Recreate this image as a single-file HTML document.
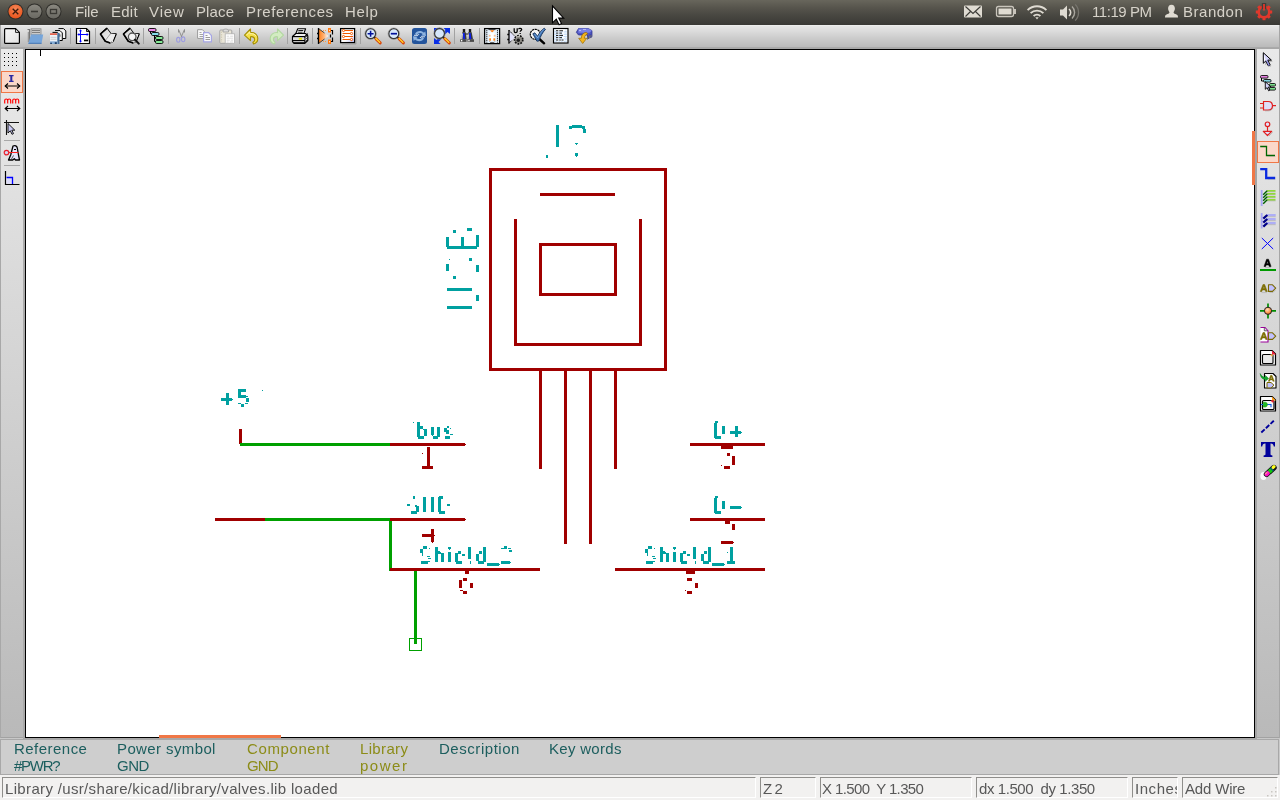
<!DOCTYPE html>
<html>
<head>
<meta charset="utf-8">
<title>EESchema</title>
<style>
html,body{margin:0;padding:0;}
body{width:1280px;height:800px;overflow:hidden;position:relative;background:#c3c3c3;font-family:"Liberation Sans",sans-serif;}
.abs{position:absolute;}
#panel{left:0;top:0;width:1280px;height:25px;background:linear-gradient(#68665c 0,#56544c 8px,#474640 16px,#3d3c38 23px,#3a3935 25px);}
#panel .m{position:absolute;top:3px;font-size:15.5px;color:#dfdbd2;white-space:nowrap;line-height:18px;}
#toolbar{left:1px;top:25px;width:1278px;height:24px;background:linear-gradient(#f0f0f0 0,#e5e5e5 1.500px,#dcdcdc 6px,#cccccc 13px,#c0c0c0 19px,#bababa 22px,#a9a9a9 22.500px,#a6a6a6 24px);}
#ltb{left:1px;top:49px;width:22px;height:689px;background:linear-gradient(#e9e9e9,#e3e3e3 15%,#b9b9b9);border-bottom:1px solid #a2a2a2;box-sizing:border-box;}
#rtb{left:1257px;top:49px;width:22px;height:689px;background:linear-gradient(#e9e9e9,#e3e3e3 15%,#b9b9b9);border-bottom:1px solid #a2a2a2;box-sizing:border-box;}
#canvas{left:25px;top:49px;width:1228px;height:687px;background:#fff;border:1px solid #000;}
#info{left:0;top:739px;width:1279px;height:36px;background:#cecece;border:1px solid #a8a8a8;box-sizing:border-box;}
#status{left:0;top:775px;width:1280px;height:25px;background:#f2f1f0;}
.sf{position:absolute;top:2px;height:21px;border-top:1px solid #8f8e8b;border-left:1px solid #8f8e8b;border-bottom:1px solid #fff;border-right:1px solid #fff;box-sizing:border-box;font-size:14.5px;color:#4c4c4c;line-height:20px;white-space:nowrap;overflow:hidden;}
.tx{will-change:transform;position:absolute;line-height:20px;white-space:pre;font-family:"Liberation Sans",sans-serif;}
</style>
</head>
<body>
<div id="panel" class="abs">
</div>
<div id="toolbar" class="abs"></div>
<div id="ltb" class="abs"></div>
<div id="rtb" class="abs"></div>
<div id="canvas" class="abs"></div>
<div class="abs" style="left:0;top:738px;width:1280px;height:1px;background:#c8c8c8"></div>
<div class="abs" style="left:23px;top:738px;width:1234px;height:1px;background:#a8a8a8"></div>
<div id="info" class="abs"></div>
<div class="abs" style="left:40px;top:50px;width:1px;height:6px;background:#000"></div>
<div class="abs" style="left:1255px;top:49px;width:2px;height:689px;background:#a4a4a4"></div>
<div class="abs" style="left:23px;top:49px;width:2px;height:689px;background:#a9a9a9"></div>
<div class="abs" style="left:0;top:25px;width:1px;height:713px;background:#a8a8a8"></div>
<div class="abs" style="left:1279px;top:25px;width:1px;height:713px;background:#a6a6a6"></div>
<div class="abs" style="left:1279px;top:739px;width:1px;height:36px;background:#cacaca"></div>
<div id="status" class="abs">
  <div class="sf" style="left:2px;width:754px;padding-left:2px"></div>
  <div class="sf" style="left:760px;width:56px;padding-left:3px"></div>
  <div class="sf" style="left:820px;width:152px;padding-left:3px"></div>
  <div class="sf" style="left:976px;width:152px;padding-left:3px"></div>
  <div class="sf" style="left:1132px;width:46px;padding-left:3px"></div>
  <div class="sf" style="left:1182px;width:96px;padding-left:3px"></div>
</div>
<svg class="abs" style="left:0;top:0" width="1280" height="800" shape-rendering="crispEdges">
<rect x="489" y="168" width="178" height="3" fill="#a00000"/>
<rect x="489" y="368" width="178" height="3" fill="#a00000"/>
<rect x="489" y="168" width="3" height="203" fill="#a00000"/>
<rect x="664" y="168" width="3" height="203" fill="#a00000"/>
<rect x="540" y="193" width="75" height="3" fill="#a00000"/>
<rect x="514" y="219" width="3" height="127" fill="#a00000"/>
<rect x="639" y="219" width="3" height="127" fill="#a00000"/>
<rect x="514" y="343" width="128" height="3" fill="#a00000"/>
<rect x="539" y="243" width="78" height="3" fill="#a00000"/>
<rect x="539" y="293" width="78" height="3" fill="#a00000"/>
<rect x="539" y="243" width="3" height="53" fill="#a00000"/>
<rect x="614" y="243" width="3" height="53" fill="#a00000"/>
<rect x="539" y="370" width="3" height="99" fill="#a00000"/>
<rect x="614" y="370" width="3" height="99" fill="#a00000"/>
<rect x="564" y="370" width="3" height="174" fill="#a00000"/>
<rect x="589" y="370" width="3" height="174" fill="#a00000"/>
<rect x="239" y="429" width="3" height="15" fill="#a00000"/>
<rect x="240" y="443" width="150" height="3" fill="#00a000"/>
<rect x="390" y="443" width="75" height="3" fill="#a00000"/>
<rect x="465" y="444" width="1" height="1" fill="#a00000"/>
<rect x="389" y="518" width="3" height="53" fill="#00a000"/>
<rect x="215" y="518" width="50" height="3" fill="#a00000"/>
<rect x="265" y="518" width="125" height="3" fill="#00a000"/>
<rect x="390" y="518" width="75" height="3" fill="#a00000"/>
<rect x="465" y="519" width="1" height="1" fill="#a00000"/>
<rect x="390" y="568" width="150" height="3" fill="#a00000"/>
<rect x="414" y="571" width="3" height="73" fill="#00a000"/>
<rect x="690" y="443" width="75" height="3" fill="#a00000"/>
<rect x="690" y="518" width="75" height="3" fill="#a00000"/>
<rect x="615" y="568" width="150" height="3" fill="#a00000"/>
<rect x="427" y="447" width="3" height="22" fill="#a00000"/>
<rect x="422" y="466" width="11" height="3" fill="#a00000"/>
<rect x="422" y="453" width="1" height="1" fill="#a00000"/>
<rect x="422" y="534" width="12" height="3" fill="#a00000"/>
<rect x="434" y="535" width="1" height="1" fill="#a00000"/>
<rect x="431" y="529" width="3" height="13" fill="#a00000"/>
<rect x="432" y="542" width="1" height="1" fill="#a00000"/>
<rect x="465" y="571" width="4" height="3" fill="#a00000"/>
<rect x="463" y="578" width="4" height="3" fill="#a00000"/>
<rect x="459" y="580" width="3" height="8" fill="#a00000"/>
<rect x="470" y="583" width="3" height="5" fill="#a00000"/>
<rect x="460" y="590" width="3" height="1" fill="#a00000"/>
<rect x="463" y="591" width="4" height="3" fill="#a00000"/>
<rect x="721" y="446" width="12" height="3" fill="#a00000"/>
<rect x="727" y="453" width="3" height="3" fill="#a00000"/>
<rect x="732" y="456" width="3" height="9" fill="#a00000"/>
<rect x="724" y="466" width="6" height="3" fill="#a00000"/>
<rect x="721" y="465" width="1" height="1" fill="#a00000"/>
<rect x="725" y="521" width="5" height="3" fill="#a00000"/>
<rect x="732" y="524" width="3" height="6" fill="#a00000"/>
<rect x="721" y="541" width="12" height="3" fill="#a00000"/>
<rect x="733" y="542" width="1" height="1" fill="#a00000"/>
<rect x="686" y="571" width="9" height="3" fill="#a00000"/>
<rect x="687" y="578" width="5" height="3" fill="#a00000"/>
<rect x="695" y="583" width="3" height="5" fill="#a00000"/>
<rect x="687" y="591" width="5" height="3" fill="#a00000"/>
<rect x="685" y="590" width="1" height="1" fill="#a00000"/>
<rect x="556" y="125" width="3" height="22" fill="#00a0a0"/>
<rect x="546" y="155" width="2" height="3" fill="#00a0a0"/>
<rect x="572" y="125" width="10" height="3" fill="#00a0a0"/>
<rect x="569" y="126" width="3" height="3" fill="#00a0a0"/>
<rect x="582" y="126" width="3" height="3" fill="#00a0a0"/>
<rect x="583" y="129" width="3" height="4" fill="#00a0a0"/>
<rect x="575" y="143" width="3" height="1" fill="#00a0a0"/>
<rect x="576" y="144" width="1" height="1" fill="#00a0a0"/>
<rect x="575" y="153" width="3" height="3" fill="#00a0a0"/>
<rect x="576" y="156" width="1" height="1" fill="#00a0a0"/>
<rect x="453" y="230" width="3" height="3" fill="#00a0a0"/>
<rect x="467" y="228" width="5" height="3" fill="#00a0a0"/>
<rect x="446" y="237" width="3" height="10" fill="#00a0a0"/>
<rect x="461" y="237" width="3" height="9" fill="#00a0a0"/>
<rect x="476" y="235" width="3" height="12" fill="#00a0a0"/>
<rect x="447" y="246" width="30" height="3" fill="#00a0a0"/>
<rect x="449" y="259" width="1" height="1" fill="#00a0a0"/>
<rect x="469" y="258" width="3" height="3" fill="#00a0a0"/>
<rect x="446" y="264" width="3" height="7" fill="#00a0a0"/>
<rect x="476" y="265" width="3" height="7" fill="#00a0a0"/>
<rect x="453" y="276" width="3" height="3" fill="#00a0a0"/>
<rect x="447" y="288" width="25" height="3" fill="#00a0a0"/>
<rect x="476" y="295" width="3" height="6" fill="#00a0a0"/>
<rect x="447" y="306" width="25" height="3" fill="#00a0a0"/>
<rect x="221" y="398" width="11" height="3" fill="#00a0a0"/>
<rect x="232" y="399" width="1" height="1" fill="#00a0a0"/>
<rect x="226" y="393" width="3" height="12" fill="#00a0a0"/>
<rect x="238" y="389" width="8" height="3" fill="#00a0a0"/>
<rect x="238" y="389" width="3" height="9" fill="#00a0a0"/>
<rect x="238" y="395" width="8" height="3" fill="#00a0a0"/>
<rect x="246" y="396" width="2" height="1" fill="#00a0a0"/>
<rect x="246" y="398" width="3" height="4" fill="#00a0a0"/>
<rect x="238" y="403" width="3" height="1" fill="#00a0a0"/>
<rect x="241" y="404" width="3" height="3" fill="#00a0a0"/>
<rect x="245" y="403" width="3" height="1" fill="#00a0a0"/>
<rect x="262" y="390" width="1" height="1" fill="#00a0a0"/>
<rect x="413" y="422" width="1" height="1" fill="#00a0a0"/>
<rect x="417" y="422" width="3" height="15" fill="#00a0a0"/>
<rect x="420" y="426" width="3" height="3" fill="#00a0a0"/>
<rect x="424" y="429" width="3" height="7" fill="#00a0a0"/>
<rect x="418" y="436" width="6" height="3" fill="#00a0a0"/>
<rect x="423" y="429" width="1" height="1" fill="#00a0a0"/>
<rect x="431" y="427" width="3" height="8" fill="#00a0a0"/>
<rect x="437" y="427" width="3" height="10" fill="#00a0a0"/>
<rect x="433" y="436" width="5" height="3" fill="#00a0a0"/>
<rect x="432" y="435" width="1" height="1" fill="#00a0a0"/>
<rect x="447" y="426" width="2" height="2" fill="#00a0a0"/>
<rect x="444" y="428" width="3" height="4" fill="#00a0a0"/>
<rect x="446" y="430" width="3" height="4" fill="#00a0a0"/>
<rect x="445" y="436" width="5" height="3" fill="#00a0a0"/>
<rect x="450" y="428" width="1" height="1" fill="#00a0a0"/>
<rect x="450" y="434" width="3" height="1" fill="#00a0a0"/>
<rect x="407" y="504" width="3" height="2" fill="#00a0a0"/>
<rect x="413" y="496" width="2" height="3" fill="#00a0a0"/>
<rect x="415" y="505" width="2" height="2" fill="#00a0a0"/>
<rect x="416" y="506" width="3" height="6" fill="#00a0a0"/>
<rect x="411" y="511" width="6" height="3" fill="#00a0a0"/>
<rect x="423" y="497" width="3" height="15" fill="#00a0a0"/>
<rect x="431" y="497" width="3" height="15" fill="#00a0a0"/>
<rect x="438" y="497" width="3" height="15" fill="#00a0a0"/>
<rect x="439" y="496" width="4" height="3" fill="#00a0a0"/>
<rect x="439" y="511" width="6" height="3" fill="#00a0a0"/>
<rect x="447" y="504" width="3" height="2" fill="#00a0a0"/>
<rect x="423" y="546" width="4" height="3" fill="#00a0a0"/>
<rect x="420" y="549" width="3" height="4" fill="#00a0a0"/>
<rect x="422" y="553" width="1" height="3" fill="#00a0a0"/>
<rect x="429" y="548" width="1" height="1" fill="#00a0a0"/>
<rect x="427" y="556" width="3" height="1" fill="#00a0a0"/>
<rect x="428" y="558" width="3" height="1" fill="#00a0a0"/>
<rect x="421" y="561" width="9" height="1" fill="#00a0a0"/>
<rect x="421" y="562" width="7" height="2" fill="#00a0a0"/>
<rect x="435" y="547" width="3" height="15" fill="#00a0a0"/>
<rect x="438" y="551" width="2" height="3" fill="#00a0a0"/>
<rect x="441" y="553" width="3" height="9" fill="#00a0a0"/>
<rect x="440" y="552" width="1" height="2" fill="#00a0a0"/>
<rect x="448" y="547" width="3" height="2" fill="#00a0a0"/>
<rect x="449" y="549" width="1" height="1" fill="#00a0a0"/>
<rect x="448" y="552" width="3" height="10" fill="#00a0a0"/>
<rect x="455" y="553" width="3" height="9" fill="#00a0a0"/>
<rect x="458" y="551" width="3" height="3" fill="#00a0a0"/>
<rect x="462" y="554" width="3" height="2" fill="#00a0a0"/>
<rect x="456" y="561" width="6" height="3" fill="#00a0a0"/>
<rect x="468" y="547" width="3" height="12" fill="#00a0a0"/>
<rect x="470" y="561" width="1" height="3" fill="#00a0a0"/>
<rect x="483" y="547" width="3" height="15" fill="#00a0a0"/>
<rect x="479" y="551" width="3" height="3" fill="#00a0a0"/>
<rect x="476" y="554" width="3" height="7" fill="#00a0a0"/>
<rect x="478" y="561" width="6" height="3" fill="#00a0a0"/>
<rect x="487" y="563" width="12" height="3" fill="#00a0a0"/>
<rect x="499" y="564" width="1" height="1" fill="#00a0a0"/>
<rect x="648" y="546" width="4" height="3" fill="#00a0a0"/>
<rect x="645" y="549" width="3" height="4" fill="#00a0a0"/>
<rect x="647" y="553" width="1" height="3" fill="#00a0a0"/>
<rect x="654" y="548" width="1" height="1" fill="#00a0a0"/>
<rect x="652" y="556" width="3" height="1" fill="#00a0a0"/>
<rect x="653" y="558" width="3" height="1" fill="#00a0a0"/>
<rect x="646" y="561" width="9" height="1" fill="#00a0a0"/>
<rect x="646" y="562" width="7" height="2" fill="#00a0a0"/>
<rect x="660" y="547" width="3" height="15" fill="#00a0a0"/>
<rect x="663" y="551" width="2" height="3" fill="#00a0a0"/>
<rect x="666" y="553" width="3" height="9" fill="#00a0a0"/>
<rect x="665" y="552" width="1" height="2" fill="#00a0a0"/>
<rect x="673" y="547" width="3" height="2" fill="#00a0a0"/>
<rect x="674" y="549" width="1" height="1" fill="#00a0a0"/>
<rect x="673" y="552" width="3" height="10" fill="#00a0a0"/>
<rect x="680" y="553" width="3" height="9" fill="#00a0a0"/>
<rect x="683" y="551" width="3" height="3" fill="#00a0a0"/>
<rect x="687" y="554" width="3" height="2" fill="#00a0a0"/>
<rect x="681" y="561" width="6" height="3" fill="#00a0a0"/>
<rect x="693" y="547" width="3" height="12" fill="#00a0a0"/>
<rect x="695" y="561" width="1" height="3" fill="#00a0a0"/>
<rect x="708" y="547" width="3" height="15" fill="#00a0a0"/>
<rect x="704" y="551" width="3" height="3" fill="#00a0a0"/>
<rect x="701" y="554" width="3" height="7" fill="#00a0a0"/>
<rect x="703" y="561" width="6" height="3" fill="#00a0a0"/>
<rect x="712" y="563" width="12" height="3" fill="#00a0a0"/>
<rect x="724" y="564" width="1" height="1" fill="#00a0a0"/>
<rect x="501" y="561" width="9" height="3" fill="#00a0a0"/>
<rect x="510" y="562" width="1" height="1" fill="#00a0a0"/>
<rect x="501" y="548" width="3" height="1" fill="#00a0a0"/>
<rect x="504" y="546" width="3" height="3" fill="#00a0a0"/>
<rect x="508" y="548" width="3" height="1" fill="#00a0a0"/>
<rect x="509" y="550" width="3" height="2" fill="#00a0a0"/>
<rect x="730" y="547" width="3" height="14" fill="#00a0a0"/>
<rect x="727" y="561" width="8" height="3" fill="#00a0a0"/>
<rect x="727" y="552" width="1" height="1" fill="#00a0a0"/>
<rect x="714" y="423" width="3" height="15" fill="#00a0a0"/>
<rect x="715" y="421" width="3" height="2" fill="#00a0a0"/>
<rect x="715" y="436" width="6" height="3" fill="#00a0a0"/>
<rect x="722" y="426" width="3" height="8" fill="#00a0a0"/>
<rect x="730" y="431" width="11" height="3" fill="#00a0a0"/>
<rect x="741" y="432" width="1" height="1" fill="#00a0a0"/>
<rect x="735" y="426" width="3" height="11" fill="#00a0a0"/>
<rect x="714" y="498" width="3" height="15" fill="#00a0a0"/>
<rect x="715" y="496" width="3" height="2" fill="#00a0a0"/>
<rect x="715" y="511" width="6" height="3" fill="#00a0a0"/>
<rect x="722" y="501" width="3" height="8" fill="#00a0a0"/>
<rect x="730" y="506" width="11" height="3" fill="#00a0a0"/>
<rect x="741" y="507" width="1" height="1" fill="#00a0a0"/>
<rect x="409.5" y="638.5" width="12" height="12" fill="none" stroke="#00a000" stroke-width="1"/>
</svg>
<svg class="abs" style="left:0;top:0" width="1280" height="800">
<!-- window buttons -->
<defs>
<radialGradient id="gcl" cx="50%" cy="30%" r="70%"><stop offset="0" stop-color="#f58555"/><stop offset="1" stop-color="#e9541c"/></radialGradient>
<linearGradient id="ggr" x1="0" y1="0" x2="0" y2="1"><stop offset="0" stop-color="#8a8880"/><stop offset="1" stop-color="#6a6962"/></linearGradient>
</defs>
<circle cx="15.5" cy="11.5" r="8" fill="#2e2d29"/><circle cx="15.5" cy="11.5" r="7" fill="url(#gcl)"/>
<path d="M12.7 8.7l5.6 5.6M18.3 8.7l-5.6 5.6" stroke="#3a1a0c" stroke-width="1.3" fill="none"/>
<circle cx="34.5" cy="11.5" r="8" fill="#2e2d29"/><circle cx="34.5" cy="11.5" r="7" fill="url(#ggr)"/>
<path d="M31 11.5h7" stroke="#3a3934" stroke-width="1.6"/>
<circle cx="53.5" cy="11.5" r="8" fill="#2e2d29"/><circle cx="53.5" cy="11.5" r="7" fill="url(#ggr)"/>
<rect x="50.5" y="9.5" width="6" height="4" fill="none" stroke="#3a3934" stroke-width="1.3"/>
<!-- mail -->
<rect x="964" y="5.5" width="18" height="12" rx="1" fill="#dfdbd2"/>
<path d="M965.5 6.5l7.5 7 7.5-7M965.5 16.5l5-5M980.5 16.5l-5-5" stroke="#3c3b37" stroke-width="1.1" fill="none"/>
<!-- battery -->
<rect x="996.5" y="6.5" width="17" height="10" rx="2" fill="none" stroke="#c9c5bc" stroke-width="1.3"/>
<rect x="998.5" y="8.5" width="13" height="6" fill="#dfdbd2"/>
<rect x="1014" y="9" width="2" height="5" fill="#c9c5bc"/>
<!-- wifi -->
<g fill="none" stroke="#dfdbd2" stroke-width="1.8" stroke-linecap="butt">
<path d="M1027.6 10.2a13.2 13.2 0 0 1 18.8 0"/>
<path d="M1030.6 13.2a9 9 0 0 1 12.8 0"/>
<path d="M1033.6 16.0a4.8 4.8 0 0 1 6.8 0"/>
</g>
<path d="M1035.3 17.2h3.4l-1.7 2.2z" fill="#dfdbd2"/>
<!-- speaker -->
<path d="M1060 9.5h3l4-4v14l-4-4h-3z" fill="#dfdbd2"/>
<path d="M1069 9a4.5 4.5 0 0 1 0 7" fill="none" stroke="#dfdbd2" stroke-width="1.6"/>
<path d="M1072 6.6a8 8 0 0 1 0 11.8" fill="none" stroke="#aaa79f" stroke-width="1.4"/>
<path d="M1075.2 4.4a11.5 11.5 0 0 1 0 16.2" fill="none" stroke="#77756e" stroke-width="1.3"/>
<!-- user -->
<path d="M1171.5 4.8c2.6 0 3.4 1.9 3.4 3.8 0 1.6-.8 2.8-1.400 3.600.2 1.300 1.500 1.700 3.000 2.300 1.200.5 1.500 1.400 1.500 3h-13c0-1.600.3-2.500 1.500-3 1.500-.6 2.800-1 3-2.300-.6-.8-1.400-2-1.400-3.600 0-1.900.8-3.800 3.400-3.800z" fill="#dfdbd2"/>
<!-- power gear -->
<g transform="translate(1264 12)" >
<circle r="5.3" fill="none" stroke="#df382c" stroke-width="2.6"/>
<g fill="#df382c">
<rect x="-1.5" y="-8.200" width="3" height="3" transform="rotate(45)"/><rect x="-1.5" y="-8.200" width="3" height="3" transform="rotate(90)"/>
<rect x="-1.5" y="-8.200" width="3" height="3" transform="rotate(135)"/><rect x="-1.5" y="-8.200" width="3" height="3" transform="rotate(180)"/>
<rect x="-1.5" y="-8.200" width="3" height="3" transform="rotate(225)"/><rect x="-1.5" y="-8.200" width="3" height="3" transform="rotate(270)"/>
<rect x="-1.5" y="-8.200" width="3" height="3" transform="rotate(315)"/>
</g>
<rect x="-2.200" y="-9" width="4.400" height="6" fill="#3f3e3a"/>
<rect x="-.9" y="-8" width="1.800" height="6.500" fill="#df382c"/>
</g>
<!-- mouse cursor -->
<path d="M552.5 6v16.800l3.800-3.600 2.800 5.500 2.400-1.200-2.800-5.400h5z" fill="#fff" stroke="#000" stroke-width="1.100" stroke-linejoin="miter"/>
<!-- orange overlay scrollbars -->
<rect x="1252" y="131" width="3" height="54" fill="#f07746"/>
<rect x="159" y="735" width="122" height="3" fill="#f07746"/>
<!-- active tool buttons -->
<rect x="1.500" y="71.500" width="21" height="21" fill="#fbd8c9" stroke="#f07746"/>
<rect x="1257.500" y="141.500" width="21" height="21" fill="#fbd8c9" stroke="#f07746"/>

<!-- ===== top toolbar icons (y 28..44) ===== -->
<g stroke="#a2a2a2" stroke-width="1">
<path d="M70.500 28v16M95.500 28v16M143.500 28v16M168.500 28v16M239.500 28v16M287.500 28v16M312.500 28v16M360.500 28v16M454.500 28v16M479.500 28v16"/>
</g>
<!-- 1 new -->
<defs><linearGradient id="gpg" x1="0" y1="0" x2="1" y2="1"><stop offset="0" stop-color="#f6f6f6"/><stop offset="1" stop-color="#e2e2e2"/></linearGradient></defs>
<path d="M4.600 29.600c0-.6.400-1 1-1h10l3.800 3.800v10c0 .6-.4 1-1 1h-12.800c-.6 0-1-.4-1-1z" fill="url(#gpg)" stroke="#000" stroke-width="1.150" stroke-linejoin="round"/>
<path d="M15.600 28.800v3.600h3.600z" fill="#fff" stroke="#000" stroke-width=".9" stroke-linejoin="round"/>
<!-- 2 open -->
<path d="M27.500 29.500h2v12" stroke="#777" stroke-width="1.200" fill="none"/>
<rect x="31" y="28.800" width="10" height="6" fill="#c9c9c9" stroke="#8a8a8a" stroke-width=".8"/>
<path d="M32 30.500h8M32 32.500h8" stroke="#777" stroke-width=".9"/>
<path d="M31 34.500h12.200l-1.600 8.800h-13.200z" fill="#76a5da"/>
<path d="M28.400 43.300h13.200" stroke="#3f73b5" stroke-width="1"/>
<path d="M28.300 32v10" stroke="#8c8c8c" stroke-width="1"/>
<!-- 3 save all -->
<path d="M58.500 28.600h5l2.300 2.300v7.600h-3" fill="#f4f4f4" stroke="#000" stroke-width="1"/>
<path d="M55 30.600h5l2.300 2.300v7.600h-3" fill="#f4f4f4" stroke="#000" stroke-width="1"/>
<path d="M52.500 32.400h5l2.300 2.300v2" fill="#f4f4f4" stroke="#000" stroke-width="1"/>
<rect x="50" y="33" width="9.300" height="11" fill="#eef2f8"/>
<rect x="50" y="33.200" width="7.300" height="1.800" fill="#e26450"/>
<path d="M50.500 37.300h6M50.500 39.300h6" stroke="#c4c4c4" stroke-width=".8"/>
<rect x="57.300" y="33" width="2.200" height="11" fill="#456f9c"/>
<rect x="50" y="41.300" width="7.300" height="2.700" fill="#86aed8"/>
<rect x="50.300" y="42.700" width="1.600" height="1.300" fill="#1d3d66"/><rect x="54.800" y="42.200" width="2" height="1.800" fill="#1d3d66"/>
<!-- 4 page settings -->
<path d="M76.500 28.500h10l3 3v12h-13z" fill="#fff" stroke="#000" stroke-width="1.200" stroke-linejoin="miter"/>
<path d="M86.500 28.500v3h3" fill="none" stroke="#000" stroke-width=".9"/>
<path d="M80.500 30v12M78 34.500h10" stroke="#0000ff" stroke-width="1"/>
<path d="M80.500 29.300l-1.500 2h3zM80.500 42.700l-1.500-2h3zM77.300 34.500l2-1.500v3zM88.700 34.500l-2-1.500v3z" fill="#0000ff"/>
<rect x="84" y="39.600" width="4.200" height="1.700" fill="#000"/>
<!-- 5 library book -->
<defs><linearGradient id="gbk" x1="0" y1="0" x2="1" y2="1"><stop offset="0" stop-color="#cfcfcf"/><stop offset="1" stop-color="#f2f2f2"/></linearGradient></defs>
<g id="book">
<path d="M106.900 28.300l-6.400 5.700 4.800 7.200 4.900 1.700 3-1.700 3-7.200-5.600-.6z" fill="#fafafa" stroke="#000" stroke-width="1.300" stroke-linejoin="round"/>
<path d="M106.900 28.600l-6 5.400 4.300 6.300 5.200-6.800z" fill="url(#gbk)"/>
<path d="M110.600 33.600l-5.200 6.900 4.700 1.600 2.700-1.500 2.700-6.500z" fill="#ececec"/>
<path d="M110.600 33.500l-5.300 7" stroke="#8a8a8a" stroke-width=".8"/>
<path d="M105.300 41.200l4.900 1.600 3-1.700" fill="none" stroke="#fff" stroke-width=".9"/>
<path d="M106.900 28.300l-6.400 5.700 4.800 7.200 4.900 1.700" fill="none" stroke="#000" stroke-width="1.600" stroke-linejoin="round"/>
</g>
<!-- 6 library browse -->
<g transform="translate(23 0)">
<path d="M106.900 28.300l-6.400 5.700 4.800 7.200 4.900 1.700 3-1.700 3-7.200-5.600-.6z" fill="#fafafa" stroke="#000" stroke-width="1.300" stroke-linejoin="round"/>
<path d="M106.900 28.600l-6 5.400 4.300 6.300 5.200-6.800z" fill="url(#gbk)"/>
<path d="M110.600 33.600l-5.200 6.900 4.700 1.600 2.700-1.500 2.700-6.500z" fill="#ececec"/>
<path d="M110.600 33.500l-5.300 7" stroke="#8a8a8a" stroke-width=".8"/>
<path d="M105.300 41.200l4.900 1.600 3-1.700" fill="none" stroke="#fff" stroke-width=".9"/>
<path d="M106.900 28.300l-6.400 5.700 4.800 7.200 4.900 1.700" fill="none" stroke="#000" stroke-width="1.600" stroke-linejoin="round"/>
</g>
<circle cx="132.200" cy="36.800" r="3.800" fill="#f6f6f6" stroke="#555" stroke-width="1.300"/>
<path d="M135 39.800l3.800 3.800" stroke="#111" stroke-width="2" stroke-linecap="round"/>
<!-- 7 hierarchy -->
<path d="M150.500 31v2.500h2M154.500 35v6.500h2M154.500 37.500h2" fill="none" stroke="#000" stroke-width="1"/>
<g stroke="#000" stroke-width=".9">
<rect x="148.500" y="28.500" width="7.500" height="3" rx="1.200" fill="#f08cec"/>
<rect x="151.500" y="32.500" width="7.500" height="3" rx="1.200" fill="#86dcea"/>
<rect x="155.500" y="36.500" width="7.500" height="3" rx="1.200" fill="#84ea96"/>
<rect x="155.500" y="40.500" width="7.500" height="3" rx="1.200" fill="#84ea96"/>
</g>
<!-- 8 cut (disabled) -->
<path d="M178.500 29.500l3.500 8M184.500 29.500l-3.500 8M178.500 29.500v3M184.500 29.500v3" fill="none" stroke="#8e8e8e" stroke-width="1"/>
<ellipse cx="178.300" cy="39.800" rx="1.700" ry="2.400" fill="none" stroke="#9c9ce0" stroke-width="1.100"/>
<ellipse cx="183.200" cy="39.300" rx="1.700" ry="2.400" fill="none" stroke="#9c9ce0" stroke-width="1.100"/>
<!-- 9 copy (disabled) -->
<path d="M197.600 29.700h4.800l2 2v6.700h-6.800z" fill="#fafafa" stroke="#9a9a9a" stroke-width="1"/>
<path d="M199.500 32.500h2M199.500 34.500h4M199.500 36.500h4" stroke="#9a9a9a" stroke-width=".9"/>
<path d="M203.600 32.700h5l2.800 2.800v6.300h-7.800z" fill="#fafafa" stroke="#a6a6e4" stroke-width="1.200"/>
<path d="M205.500 35.500h2M205.500 37.500h4.500M205.500 39.500h4.500" stroke="#8e8e8e" stroke-width=".9"/>
<!-- 10 paste (disabled) -->
<rect x="219.800" y="30" width="12" height="13.300" rx="1" fill="#e9e5d8" stroke="#a6a6a6" stroke-width="1"/>
<path d="M221.500 31.500v10.500" stroke="#d2ceb8" stroke-width="1.200" stroke-dasharray="1.500 1"/>
<path d="M223 30.800c0-2.300 5.500-2.300 5.500 0v1.200h-5.500z" fill="#dcdcdc" stroke="#9c9c9c" stroke-width=".8"/>
<rect x="225.200" y="33.800" width="9.300" height="9.500" fill="#fff" stroke="#b0b0b0" stroke-width=".8"/>
<path d="M226.700 36.200h2.500M230.200 36.200h3M226.700 38.200h6.500M226.700 40.200h3M230.700 40.200h2.500M226.700 42h2M229.700 42h3.500" stroke="#bdbdbd" stroke-width=".55"/>
<!-- 11 undo -->
<path d="M244.500 35.200l6-6.200v3.600c4.500-.3 7.300 2.200 7.300 6 0 3-1.500 4.800-4.300 5.400l-.6-1.700c1.600-.8 1.900-2.100 1.700-3.300-.3-1.700-1.900-2.500-4.100-2.300v3.900z" fill="#f5e04a" stroke="#a48f00" stroke-width="1.100" stroke-linejoin="round"/>
<path d="M246.500 35.200l3.300-3.400v1.800c3.500-.2 5.600.8 6.400 2.800" fill="none" stroke="#fdf5b4" stroke-width=".9"/>
<!-- 12 redo (disabled) -->
<path d="M283.500 35.200l-6-6.200v3.600c-4.500-.3-7.300 2.200-7.300 6 0 3 1.500 4.800 4.300 5.400l.6-1.700c-1.600-.8-1.900-2.100-1.700-3.300.3-1.700 1.900-2.500 4.100-2.300v3.900z" fill="#d3ecc2" stroke="#b2d8a0" stroke-width="1.100" stroke-linejoin="round"/>

<!-- 13 printer -->
<path d="M295.800 33.500l2-4.800h7.800l-1.800 4.800z" fill="#fff" stroke="#000" stroke-width="1.100" stroke-linejoin="round"/>
<path d="M298.300 30.500h5M297.700 32.200h5" stroke="#000" stroke-width=".9"/>
<path d="M292.500 36.500l3.300-3h9.700l2.300 2.300v4.700l-3 2.800h-10.800l-1.500-1.800z" fill="#f0f0f0" stroke="#000" stroke-width="1.200" stroke-linejoin="round"/>
<path d="M292.500 36.600h12.300l3-3M304.800 36.600v6.600" stroke="#000" stroke-width="1.100" fill="none"/>
<rect x="293.300" y="37.800" width="11" height="2" fill="#d9d9d9"/>
<rect x="298.800" y="37.900" width="3.200" height="1.800" fill="#e8e800"/>
<path d="M293 40.500h11.800M293.500 42.300h11" stroke="#000" stroke-width="1"/>
<path d="M305.300 37.500l2-2M305.300 39.500l2-2M305.300 41.500l2-2" stroke="#000" stroke-width=".8"/>
<!-- 14 library editor (orange triangle) -->
<defs><linearGradient id="gor" x1="0" y1="0" x2="1" y2="0"><stop offset="0" stop-color="#ff7a10"/><stop offset=".55" stop-color="#ffb478"/><stop offset="1" stop-color="#fff"/></linearGradient></defs>
<path d="M318.500 28.500v15l10-7.500z" fill="url(#gor)"/>
<path d="M318.500 28v16M317 33.500h1.500M317 38.500h1.500" stroke="#000" stroke-width="1.300" fill="none"/>
<path d="M318.500 28.500l6 4.500M318.500 43.500l6-4.500" stroke="#222" stroke-width=".8" fill="none"/>
<path d="M330 30.500h2.500v4M330 41.500h2.500v-4M330.500 34.500v3" stroke="#000" stroke-width="1.200" fill="none"/>
<rect x="328" y="28" width="3" height="4.500" fill="#ff7a10"/><rect x="328" y="39.500" width="3" height="4.500" fill="#ff7a10"/>
<rect x="329" y="29.800" width="1" height="1" fill="#fff"/><rect x="329" y="41.300" width="1" height="1" fill="#fff"/>
<path d="M323 30.500h3M323 41.500h3" stroke="#ff9a40" stroke-width="1" stroke-dasharray="1 1"/>
<!-- 15 pcb -->
<defs><linearGradient id="gpcb" x1="0" y1="0" x2="1" y2="1"><stop offset="0" stop-color="#fff"/><stop offset=".6" stop-color="#fff"/><stop offset="1" stop-color="#b9b9f5"/></linearGradient></defs>
<rect x="340.600" y="28.600" width="14" height="14" fill="url(#gpcb)" stroke="#000" stroke-width="1.250"/>
<path d="M356 30v14h-14" stroke="#8a8a8a" stroke-width="1" fill="none" opacity=".6"/>
<g stroke="#f25a00" stroke-width="1" fill="#fff">
<path d="M344.500 30.500h8.500M342.500 33.500h8M344.500 36.500h8.500M342.500 39.500h8"/>
<circle cx="343.500" cy="30.500" r="1.100"/><circle cx="351.500" cy="33.500" r="1.100"/><circle cx="343.500" cy="36.500" r="1.100"/><circle cx="351.500" cy="39.500" r="1.100"/>
</g>
<!-- 16 zoom in -->
<g id="lens">
<circle cx="370.600" cy="33.700" r="5" fill="#d8e8fb" stroke="#333" stroke-width="1.300"/>
<circle cx="370.600" cy="33.700" r="5.800" fill="none" stroke="#8f8f8f" stroke-width=".5"/>
<path d="M374.200 37.200l1.600 1.500" stroke="#222" stroke-width="1.800"/>
<path d="M376 38.900l4.200 4" stroke="#d8420a" stroke-width="3" stroke-linecap="round"/>
<path d="M375.900 38.600l3.800 3.600" stroke="#ffd428" stroke-width="1.400" stroke-linecap="round"/>
</g>
<path d="M367.600 33.700h6M370.600 30.700v6" stroke="#00109a" stroke-width="1.500"/>
<!-- 17 zoom out -->
<g transform="translate(23.200 0)">
<circle cx="370.600" cy="33.700" r="5" fill="#d8e8fb" stroke="#333" stroke-width="1.300"/>
<circle cx="370.600" cy="33.700" r="5.800" fill="none" stroke="#8f8f8f" stroke-width=".5"/>
<path d="M374.200 37.200l1.600 1.500" stroke="#222" stroke-width="1.800"/>
<path d="M376 38.900l4.200 4" stroke="#d8420a" stroke-width="3" stroke-linecap="round"/>
<path d="M375.900 38.600l3.800 3.600" stroke="#ffd428" stroke-width="1.400" stroke-linecap="round"/>
</g>
<path d="M790.600 33.700" />
<path d="M390.800 33.700h6.200" stroke="#00109a" stroke-width="1.700"/>
<!-- 18 redraw -->
<rect x="412" y="28" width="15" height="16" rx="2.500" fill="#23549c"/>
<path d="M415 34c1-3 6-4.200 9-1.300l1.300-1.400.7 4.700-4.700-.5 1.400-1.400c-2-1.700-5-1.200-5.700 1.200z" fill="#8fb4e0"/>
<path d="M424 38.200c-1 3-6 4.200-9 1.300l-1.300 1.400-.7-4.700 4.700.5-1.400 1.400c2 1.700 5 1.200 5.700-1.200z" fill="#8fb4e0"/>
<path d="M414 35.300h4l1-1.200M425 36.800h-4l-1 1.200" stroke="#eaf2fb" stroke-width=".9" fill="none"/>
<!-- 19 zoom fit -->
<path d="M434 28h6.500l-2 2 2.500 2.500-2 2-2.500-2.500-2.500 2zM450 28h-6.500l2 2-2.500 2.500 2 2 2.500-2.500 2.500 2zM434 44h6.500l-2-2 2.500-2.500-2-2-2.500 2.500-2.500-2z" fill="#0a2fe6"/>
<circle cx="439.500" cy="33.500" r="5" fill="#d6e7fa" stroke="#333" stroke-width="1.300"/>
<circle cx="439.500" cy="33.500" r="5.800" fill="none" stroke="#8f8f8f" stroke-width=".5"/>
<path d="M443.100 37.100l1.600 1.500" stroke="#222" stroke-width="1.800"/>
<path d="M445 38.800l4.300 4.100" stroke="#d8420a" stroke-width="3" stroke-linecap="round"/>
<path d="M444.900 38.500l3.900 3.700" stroke="#ffd428" stroke-width="1.400" stroke-linecap="round"/>
<!-- 20 find (binoculars) -->
<g>
<rect x="462.800" y="29" width="2.400" height="3.500" fill="#1a1a1a"/><rect x="468.800" y="29" width="2.400" height="3.500" fill="#1a1a1a"/>
<path d="M462.300 32.300h3.500l.9 7.300h-5.700z" fill="#3a3a3a"/>
<path d="M468.200 32.300h3.500l1.300 7.300h-5.700z" fill="#3a3a3a"/>
<path d="M463.700 33l.5 6.500M469.800 33l.7 6.500" stroke="#0a1ef0" stroke-width="1.700"/>
<path d="M462.300 33.500l-.5 5.500M468.300 33.500l-.3 5.500" stroke="#fff" stroke-width="1"/>
<rect x="460.200" y="39.300" width="6.300" height="2.600" fill="#4a4a4a"/><rect x="467.500" y="39.300" width="6.500" height="2.600" fill="#4a4a4a"/>
<rect x="461" y="39.800" width="1.300" height="1.600" fill="#fff"/><rect x="468.300" y="39.800" width="1.300" height="1.600" fill="#fff"/>
<path d="M465.500 34h3" stroke="#333" stroke-width="1.200"/>
</g>
<!-- 21 netlist -->
<rect x="484.600" y="28.600" width="15" height="15" fill="#e8f3fd" stroke="#000" stroke-width="1.250"/>
<path d="M486.800 30.200v12.500M497.500 30.200v12.500" stroke="#000" stroke-width="1.100" stroke-dasharray="1 1"/>
<path d="M488.500 29.600h7" stroke="#222" stroke-width=".9"/>
<path d="M490 30.200h4.400l-2.200 2.300z" fill="#ff7a10"/>
<rect x="489.800" y="32.500" width="4.800" height="8" fill="#fff"/>
<rect x="488.800" y="34.800" width="1.800" height="1.800" fill="#ffc090"/><rect x="493.800" y="34.800" width="1.800" height="1.800" fill="#ffc090"/>
<rect x="489.200" y="38.300" width="1.800" height="2.400" fill="#ff8a20"/><rect x="493.400" y="38.300" width="1.800" height="2.400" fill="#ff8a20"/>
<path d="M489.800 41.700l1 1h2.800l1-1" stroke="#333" stroke-width=".9" fill="none"/>
<!-- 22 annotate -->
<path d="M509 30.300v13l6-6.300z" fill="#e2e2fb"/>
<path d="M509 30v13.500M507.300 34.500h1.700M507.300 39.500h1.700" stroke="#000" stroke-width="1.300"/>
<path d="M509 30.300l5 5.200M509 43.300l2.500-2.600" stroke="#000" stroke-width="1" stroke-dasharray="1.400 .8"/>
<path d="M514.200 28.300v3c0 1.700 3 1.700 3 0v-3M518.700 29.300c0-1.300 3-1.300 3 .2 0 1.100-1.500 1-1.500 2.300M520.200 33v1" fill="none" stroke="#000" stroke-width="1.250"/>
<circle cx="518.700" cy="39.800" r="4" fill="#8c8a84" stroke="#111" stroke-width="1.900" stroke-dasharray="1.700 1.100"/>
<circle cx="518.700" cy="39.800" r="3.100" fill="#8c8a84"/>
<circle cx="518.300" cy="40.200" r="1.700" fill="#1a1a1a"/>
<path d="M516 37.500a3.500 3.500 0 0 1 4-.8" stroke="#c8c6c0" stroke-width=".9" fill="none"/>
<!-- 23 erc -->
<circle cx="535.300" cy="34.300" r="5" fill="#f6f6f6" stroke="#000" stroke-width="1.200" stroke-dasharray="2.200 .6"/>
<path d="M539.300 39l4.800 4.300" stroke="#000" stroke-width="2.400" stroke-linecap="round"/>
<path d="M532.800 33.800l2-1 2.800 3.400c1.600-3.200 3.600-5.800 6.600-8l1.300 1.200c-3 3-5 6.800-6.600 11.600l-2 .2z" fill="#3f74b6" stroke="#0e2a52" stroke-width=".8" stroke-linejoin="round"/>
<path d="M534.500 34l3.200 4c1.500-3.300 3.500-6.300 6.300-8.800" fill="none" stroke="#8ab4e6" stroke-width=".7"/>
<!-- 24 bom -->
<rect x="553.500" y="28.500" width="14.500" height="14.500" fill="#fff" stroke="#000" stroke-width="1.150"/>
<g stroke="#000" stroke-width=".95"><path d="M556 30.800h2.300M559.300 30.800h3.700M556 33.100h2.300M559.300 33.100h2.700M556 35.400h2.300M559.300 35.400h3.700M556 37.700h2.300M559.300 37.700h2.700M556 40h2.300M559.300 40h1.500M561.500 40h2"/></g>
<g stroke="#86b8f0" stroke-width=".7" stroke-dasharray=".8 .8"><path d="M554.500 31.950h12.500M554.500 34.250h12.500M554.500 36.550h12.500M554.500 38.850h12.500M554.500 41.300h12.500M555.200 29.500v13M565.800 29.500v13"/></g>
<!-- 25 back annotate -->
<path d="M576.300 32.300l2.200-3.800h9.800l3.700 2.200v6l-1.600 1v-3l-1.400 1v2.600l-1.500.5v-3.800h-9z" fill="#4f56c0" stroke="#262c88" stroke-width=".7"/>
<path d="M578.500 28.500h9.800l3.700 2.200-2.700 2h-11z" fill="#7a82e6"/>
<path d="M579 30.500h2M583 29.500h3" stroke="#c8ccff" stroke-width=".8"/>
<path d="M586.300 32.300c-3.200.4-5 2.800-5 6h-2.600l4 5.200 4-5.200h-2.400c.1-2.200 1.400-3.700 3.400-4.300z" fill="#f2b41e" stroke="#9a6c00" stroke-width=".7"/>
<path d="M587.500 37v2.500M589.300 36v2.500M591 35v2.500" stroke="#6a6a6a" stroke-width="1"/>

<!-- ===== left toolbar ===== -->
<g fill="#000" shape-rendering="crispEdges">
<rect x="4" y="53" width="1" height="1"/><rect x="8" y="53" width="1" height="1"/><rect x="12" y="53" width="1" height="1"/><rect x="16" y="53" width="1" height="1"/>
<rect x="4" y="57" width="1" height="1"/><rect x="8" y="57" width="1" height="1"/><rect x="12" y="57" width="1" height="1"/><rect x="16" y="57" width="1" height="1"/>
<rect x="4" y="61" width="1" height="1"/><rect x="8" y="61" width="1" height="1"/><rect x="12" y="61" width="1" height="1"/><rect x="16" y="61" width="1" height="1"/>
<rect x="4" y="65" width="1" height="1"/><rect x="8" y="65" width="1" height="1"/><rect x="12" y="65" width="1" height="1"/><rect x="16" y="65" width="1" height="1"/>
</g>
<!-- inches -->
<path d="M9 75h4.600v1.200h-1.300v4.600h1.300v1.200h-4.600v-1.200h1.300v-4.600h-1.300z" fill="#2a2aa2"/>
<path d="M5.500 86h14" stroke="#000" stroke-width="1"/>
<path d="M8 83.500l-2.800 2.500 2.800 2.500M17 83.500l2.800 2.500-2.800 2.500" fill="none" stroke="#000" stroke-width="1.100"/>
<!-- mm -->
<path d="M4.700 103.500v-3c0-2 3-2 3 0v3M7.700 100.500c0-2 3-2 3 0v3M12.700 103.500v-3c0-2 3-2 3 0v3M15.700 100.500c0-2 3-2 3 0v3" fill="none" stroke="#ff0000" stroke-width="1.150"/>
<path d="M5.500 108.500h14" stroke="#000" stroke-width="1"/>
<path d="M8 106l-2.800 2.500 2.800 2.500M17 106l2.800 2.500-2.800 2.500" fill="none" stroke="#000" stroke-width="1.100"/>
<!-- cursor shape -->
<path d="M4 122.500h15M6.500 120v15" stroke="#111" stroke-width="1.100"/>
<path d="M8 123.500v9.500l2.300-2.200 1.700 3.500 1.500-.7-1.700-3.400h3z" fill="#c9c9f5" stroke="#000" stroke-width=".9" stroke-linejoin="round"/>
<path d="M4 140.500h16M4 165.500h16" stroke="#a8a8a8" stroke-width="1"/>
<!-- hidden pins ghost -->
<path d="M13 146c2-1 4 0 4.300 2l1.200 7 1 5h-4l-1.200-1.200-1.500 1.200h-4.300l2.200-5z" fill="#e4e4fa" stroke="#000" stroke-width="1.300" stroke-linejoin="round"/>
<path d="M14 149.500h2" stroke="#000" stroke-width="1"/>
<path d="M13.500 155.500l-2 3.500" stroke="#333" stroke-width=".8"/>
<path d="M9 152.500h9.500" stroke="#ff2020" stroke-width="1"/>
<circle cx="6.500" cy="152.600" r="2.300" fill="#d6d6f2" stroke="#e8202a" stroke-width="1.200"/>
<!-- orthogonal -->
<path d="M5.500 171v13.500h14" fill="none" stroke="#000" stroke-width="1.200"/>
<rect x="6.500" y="177.500" width="5.500" height="6" fill="#dcdcfa"/>
<path d="M6.500 177.500h6v6.500" fill="none" stroke="#0000ff" stroke-width="1.300"/>

<!-- ===== right toolbar ===== -->
<!-- arrow -->
<path d="M1264.300 54.200l1 11 2.500-2.300 2 4 1.600-.8-2-4 3.400-.3z" fill="#555" opacity=".35"/>
<path d="M1263.300 52.700v10.600l2.600-2.400 2.400 5 1.800-.9-2.400-4.900h3.700z" fill="#d4d4fb" stroke="#000" stroke-width="1" stroke-linejoin="round"/>
<path d="M1264 54.500v7l1.500-1.500z" fill="#fff"/>
<path d="M1266.700 60.500l2.500 5" stroke="#8e8ee6" stroke-width="1.300"/>
<!-- hierarchy nav -->
<path d="M1261.500 78v3h2" fill="none" stroke="#000" stroke-width="1"/>
<g stroke="#000" stroke-width=".85">
<rect x="1260.500" y="75.500" width="7.500" height="2.600" rx="1" fill="#e684e0"/>
<rect x="1263.500" y="79.500" width="7.500" height="2.600" rx="1" fill="#7fd3e0"/>
<rect x="1269.500" y="83.500" width="6" height="2.600" rx="1" fill="#7be08c"/>
<rect x="1269.500" y="87.500" width="6" height="2.600" rx="1" fill="#7be08c"/>
</g>
<path d="M1265.300 81.700v7.600l1.800-1.700 1.500 3.200 1.300-.6-1.500-3.200h2.600z" fill="#d4d4fb" stroke="#000" stroke-width=".9" stroke-linejoin="round"/>
<!-- place component (AND gate) -->
<path d="M1263.500 101.500h4.500c6 0 6 8.500 0 8.500h-4.500z" fill="#dedefa" stroke="#e02020" stroke-width="1.200"/>
<path d="M1260 103.500h3.500M1260 108h3.500M1272.800 105.700h3.200" stroke="#e02020" stroke-width="1.200"/>
<path d="M1265 110.800h4c2-.3 3.500-1.500 4-3" fill="none" stroke="#888" stroke-width=".8" opacity=".6"/>
<!-- power -->
<circle cx="1267.500" cy="124.300" r="2.300" fill="#e0e0fb" stroke="#e02020" stroke-width="1.200"/>
<path d="M1267.500 126.800v4.500" stroke="#e02020" stroke-width="1.200"/>
<path d="M1263.300 131.300h8.400l-4.200 4.200z" fill="#e0e0fb" stroke="#e02020" stroke-width="1.200" stroke-linejoin="round"/>
<path d="M1269 136l3.500-3.800" stroke="#888" stroke-width=".8" opacity=".6"/>
<!-- wire -->
<path d="M1260.200 146.500h6.300v9h8.500" fill="none" stroke="#006600" stroke-width="1.300"/>
<path d="M1267.500 156.500h8" stroke="#999" stroke-width=".7" opacity=".5"/>
<!-- bus -->
<path d="M1260.200 169.200h6v8.800h9" fill="none" stroke="#0a2ae0" stroke-width="2.300"/>
<path d="M1267.800 179.600h7.500" stroke="#888" stroke-width=".7" opacity=".5"/>
<!-- wire to bus entry -->
<rect x="1260.800" y="190" width="1.800" height="16" fill="#a6a6f4"/>
<path d="M1267 190.800h8.500M1267 193.800h8.500M1267 196.800h8.500M1267 199.800h8.500" stroke="#77d800" stroke-width="1.300"/>
<path d="M1267.200 190.800l-4 4M1267.200 193.800l-4 4M1267.200 196.800l-4 4M1267.200 199.800l-4 4" stroke="#006000" stroke-width="1.400"/>
<path d="M1267 191.900h8.500M1267 194.900h8.500M1267 197.900h8.500M1267 200.900h8.500" stroke="#888" stroke-width=".6" opacity=".6"/>
<!-- bus to bus entry -->
<rect x="1260.800" y="213" width="1.800" height="15.500" fill="#a6a6f4"/>
<path d="M1267 215.200h8.700M1267 219.200h8.700M1267 223.200h8.700" stroke="#aeaef6" stroke-width="2.200"/>
<path d="M1267.300 215l-4 3.600M1267.300 219l-4 3.600M1267.300 223l-4 3.600" stroke="#000088" stroke-width="2.300"/>
<path d="M1267 216.700h8.700M1267 220.700h8.700M1267 224.700h8.700" stroke="#888" stroke-width=".6" opacity=".6"/>
<!-- no connect -->
<path d="M1261.800 238l11.400 11M1273.200 238l-11.400 11" stroke="#0000ff" stroke-width="1"/>
<!-- label A -->
<path d="M1264 266.500l2.600-7.300h1.900l2.600 7.300h-1.900l-.5-1.500h-2.500l-.5 1.500zM1266.700 263.600h1.600l-.8-2.500z" fill="#000" stroke="#000" stroke-width=".5"/>
<rect x="1260" y="269" width="16" height="2" fill="#009a00"/>
<path d="M1265 267.500h6" stroke="#888" stroke-width=".7" opacity=".5"/>
<!-- global label AD -->
<g id="adlab">
<path d="M1260.300 291.500l2.700-7h1.600l2.700 7h-1.600l-.6-1.600h-2.700l-.6 1.600zM1263 288.600h1.700l-.85-2.400z" fill="#857400" stroke="#6b5e00" stroke-width=".5"/>
<path d="M1268.500 284.800h4l3.200 3.300-3.200 3.300h-4z" fill="#c0c0ff" stroke="#7a6a00" stroke-width="1.100" stroke-linejoin="round"/>
</g>
<path d="M1261.500 292.600h5.500M1269.500 292.500h3.500l2.500-2.500" stroke="#888" stroke-width=".7" opacity=".5" fill="none"/>
<!-- junction -->
<path d="M1260 310.800h16M1268 303.500v15" stroke="#008c00" stroke-width="1.700"/>
<defs><radialGradient id="gj" cx="40%" cy="35%" r="70%"><stop offset="0" stop-color="#ffe0c0"/><stop offset=".6" stop-color="#ff9a50"/><stop offset="1" stop-color="#d06010"/></radialGradient></defs>
<circle cx="1268" cy="310.800" r="3.600" fill="url(#gj)" stroke="#222" stroke-width="1"/>
<!-- hierarchical label -->
<path d="M1260.500 327.500h4.500l3 3.500v11h-7.500" fill="#fff" stroke="#990099" stroke-width="1.100"/>
<path d="M1264.300 327.800v3h3" fill="#ddd" stroke="#444" stroke-width=".8"/>
<g transform="translate(0 48)">
<path d="M1260.300 291.500l2.700-7h1.600l2.700 7h-1.600l-.6-1.600h-2.700l-.6 1.600zM1263 288.600h1.700l-.85-2.400z" fill="#857400" stroke="#6b5e00" stroke-width=".5"/>
<path d="M1268.500 284.800h4l3.200 3.300-3.200 3.300h-4z" fill="#c0c0ff" stroke="#7a6a00" stroke-width="1.100" stroke-linejoin="round"/>
</g>
<!-- hierarchical sheet -->
<path d="M1260.500 350.500h11.500l3.500 3.500v11h-15z" fill="#fdfdfd" stroke="#000" stroke-width="1.200" stroke-linejoin="round"/>
<rect x="1262.500" y="354.500" width="10.500" height="9" rx="1" fill="#e9e9e9" stroke="#000" stroke-width="1.100"/>
<path d="M1272 350.400l4 4h-4z" fill="#f0203a"/>
<path d="M1270.500 354.300h2.200v2.200c-1.300 0-2.200-.8-2.200-2.200z" fill="#ffb84a"/>
<!-- import hier label -->
<path d="M1264.500 373.500h8.500l3 3v11.500h-11.500z" fill="#fdfdfd" stroke="#000" stroke-width="1.100" stroke-linejoin="round"/>
<path d="M1260.200 373.600c1.200 2.600 3 3.700 5.200 3.700v-1.800l3.200 2.900-3.200 2.900v-1.800c-3 0-5-2.300-5.200-5.900z" fill="#10a82a" stroke="#0a7a1c" stroke-width=".5"/>
<path d="M1268.300 381.300l2.300-6h1.400l2.300 6h-1.400l-.5-1.400h-2.200l-.5 1.400zM1270.600 378.800h1.400l-.7-2z" fill="#857400" stroke="#6b5e00" stroke-width=".4"/>
<path d="M1267 382.500h4l3 2.700-3 2.700h-4z" fill="#c0c0ff" stroke="#7a6a00" stroke-width="1"/>
<!-- sheet pin -->
<path d="M1260.500 396.500h11.500l3.500 3.500v11h-15z" fill="#fdfdfd" stroke="#000" stroke-width="1.200" stroke-linejoin="round"/>
<rect x="1262.500" y="400.500" width="11.500" height="9" rx="1" fill="#f4f4f4" stroke="#000" stroke-width="1.200"/>
<path d="M1272 396.400l4 4h-4z" fill="#ffa020"/>
<path d="M1271 400.200h2.600v2.400c-1.500 0-2.600-.9-2.600-2.400z" fill="#f0203a"/>
<path d="M1261 404.500h2.500M1267 404.500h4v2.800" fill="none" stroke="#0a5cf0" stroke-width="1.100"/>
<path d="M1263.300 402.200h1.800c3 0 3 4.800 0 4.800h-1.800z" fill="#22bb22" stroke="#10a010" stroke-width=".6"/>
<!-- dashed line -->
<path d="M1261.300 432.500l13.200-12.400" stroke="#00009b" stroke-width="1.900" stroke-dasharray="4.600 1.700"/>
<!-- text T -->
<path d="M1261 442h14v4.500h-1.200c-.3-1.800-1.200-2.700-3-2.900h-.3v10.400c0 1 .6 1.400 1.900 1.500v1.500h-8.800v-1.500c1.300-.1 1.900-.5 1.900-1.500v-10.400h-.3c-1.800.2-2.700 1.100-3 2.900h-1.200z" fill="#00009b"/>
<!-- delete (eraser) -->
<ellipse cx="1263.500" cy="476" rx="3.200" ry="4" fill="#fff" opacity=".9"/>
<g transform="rotate(-42 1270 471)">
<rect x="1262.500" y="468.300" width="15.500" height="5.600" rx="2.800" fill="#111"/>
<rect x="1263.200" y="469" width="6" height="4.200" rx="2.100" fill="#ff10c8"/>
<rect x="1264" y="469.400" width="3.500" height="1.300" rx=".6" fill="#ff9090"/>
<rect x="1268.700" y="469" width="3.300" height="4.200" fill="#10c810"/>
<rect x="1272" y="469" width="1.200" height="4.200" fill="#0a6a9a"/>
<rect x="1273.200" y="469" width="4.200" height="3" rx="1.200" fill="#ffff20"/>
</g>

<!-- resize grip -->
<g fill="#c9c7c2">
<rect x="1275" y="787" width="1.500" height="1.500"/><rect x="1275" y="791" width="1.500" height="1.500"/><rect x="1275" y="795" width="1.500" height="1.500"/>
<rect x="1271" y="791" width="1.500" height="1.500"/><rect x="1271" y="795" width="1.500" height="1.500"/><rect x="1267" y="795" width="1.500" height="1.500"/>
</g>

</svg>
<span class="tx" style="left:74.70px;top:1.90px;font-size:15px;letter-spacing:-0.191px;color:#d6d2c9;">File</span>
<span class="tx" style="left:110.70px;top:1.90px;font-size:15px;letter-spacing:0.247px;color:#d6d2c9;">Edit</span>
<span class="tx" style="left:149.10px;top:1.90px;font-size:15px;letter-spacing:0.900px;color:#d6d2c9;">View</span>
<span class="tx" style="left:195.70px;top:1.90px;font-size:15px;letter-spacing:0.117px;color:#d6d2c9;">Place</span>
<span class="tx" style="left:245.70px;top:1.90px;font-size:15px;letter-spacing:0.623px;color:#d6d2c9;">Preferences</span>
<span class="tx" style="left:344.60px;top:1.90px;font-size:15px;letter-spacing:0.680px;color:#d6d2c9;">Help</span>
<span class="tx" style="left:1092.40px;top:1.90px;font-size:15px;letter-spacing:-0.428px;color:#d6d2c9;">11:19 PM</span>
<span class="tx" style="left:1182.50px;top:1.90px;font-size:15px;letter-spacing:0.514px;color:#d6d2c9;">Brandon</span>
<span class="tx" style="left:13.60px;top:739.05px;font-size:15px;letter-spacing:0.466px;color:#1c5e5e;">Reference</span>
<span class="tx" style="left:13.60px;top:755.80px;font-size:15px;letter-spacing:-1.247px;color:#1c5e5e;">#PWR?</span>
<span class="tx" style="left:117.35px;top:739.05px;font-size:15px;letter-spacing:0.386px;color:#1c5e5e;">Power symbol</span>
<span class="tx" style="left:117.35px;top:755.80px;font-size:15px;letter-spacing:-0.447px;color:#1c5e5e;">GND</span>
<span class="tx" style="left:246.60px;top:739.05px;font-size:15px;letter-spacing:0.611px;color:#8c8c18;">Component</span>
<span class="tx" style="left:246.60px;top:755.80px;font-size:15px;letter-spacing:-0.822px;color:#8c8c18;">GND</span>
<span class="tx" style="left:360.35px;top:739.05px;font-size:15px;letter-spacing:0.348px;color:#8c8c18;">Library</span>
<span class="tx" style="left:360.35px;top:755.80px;font-size:15px;letter-spacing:1.523px;color:#8c8c18;">power</span>
<span class="tx" style="left:438.60px;top:739.05px;font-size:15px;letter-spacing:0.542px;color:#1c5e5e;">Description</span>
<span class="tx" style="left:549.10px;top:739.05px;font-size:15px;letter-spacing:0.302px;color:#1c5e5e;">Key words</span>
<span class="tx" style="left:4.60px;top:778.80px;font-size:15px;letter-spacing:0.341px;color:#585858;">Library /usr/share/kicad/library/valves.lib loaded</span>
<span class="tx" style="left:762.85px;top:778.80px;font-size:15px;letter-spacing:-0.869px;color:#585858;">Z 2</span>
<span class="tx" style="left:822.10px;top:778.80px;font-size:15px;letter-spacing:-0.618px;color:#585858;">X 1.500&nbsp; Y 1.350</span>
<span class="tx" style="left:979.10px;top:778.80px;font-size:15px;letter-spacing:-0.426px;color:#585858;">dx 1.500&nbsp; dy 1.350</span>
<span class="tx" style="left:1134.85px;top:778.80px;font-size:15px;letter-spacing:0.549px;color:#585858;width:42.2px;overflow:hidden;">Inches</span>
<span class="tx" style="left:1184.85px;top:778.80px;font-size:15px;letter-spacing:-0.177px;color:#585858;">Add Wire</span>
</body>
</html>
